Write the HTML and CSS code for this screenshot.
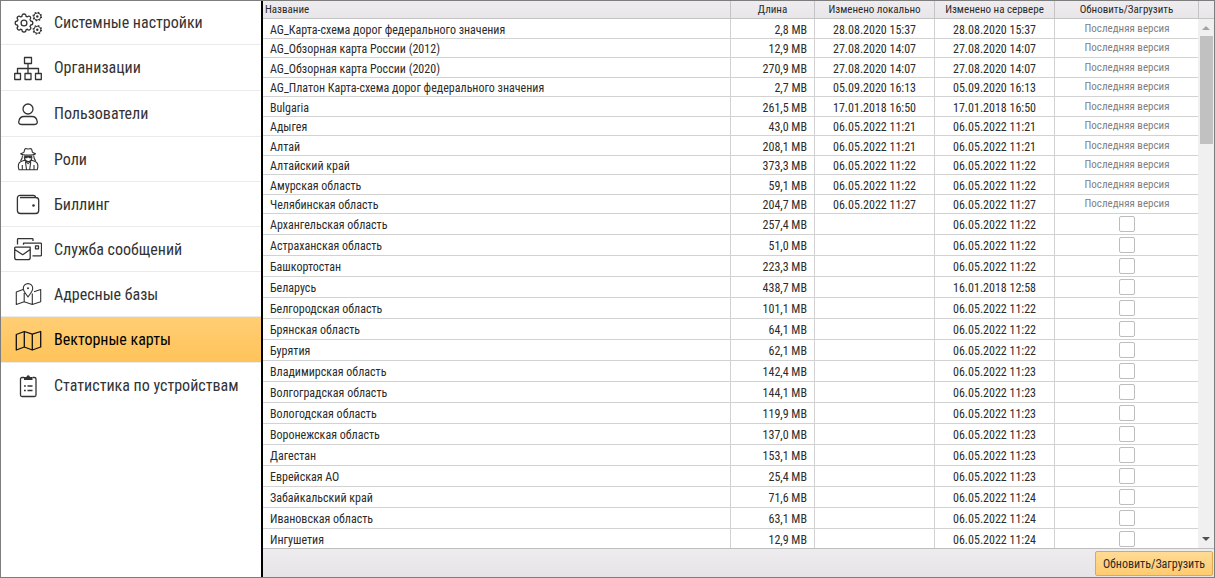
FILE: index.html
```html
<!DOCTYPE html>
<html lang="ru">
<head>
<meta charset="utf-8">
<title>Векторные карты</title>
<link rel="stylesheet" href="styles.css">
</head>
<body>
<div class="app">
  <nav class="sidebar">
    <a class="nav-item" href="#"><svg class="icon" viewBox="0 0 28 28"><path d="M8 7.300 Q7.800 5 10 5 T12 7.300 L13.300 7.900 Q15 6.300 16.200 7.700 T16 10.600 L16.700 12 Q18.800 12 18.800 14 T16.700 16 L16 17.500 Q17.600 19 16.200 20.400 T13.300 20.200 L12 20.800 Q12.200 23 10 23 T8 20.800 L6.700 20.200 Q5 21.800 3.700 20.400 T4 17.500 L3.300 16 Q1.200 16 1.200 14 T3.300 12 L4 10.600 Q2.400 9 3.700 7.700 T6.700 7.900 Z"/><circle cx="10" cy="14" r="2.900"/><circle class="cog" cx="23.300" cy="7.500" r="3.500"/><circle class="teeth" cx="23.300" cy="7.500" r="4.200"/><circle class="dot" cx="23.300" cy="7.500" r="1.200"/><circle class="cog" cx="23.300" cy="20.800" r="3.500"/><circle class="teeth" cx="23.300" cy="20.800" r="4.200"/><circle class="dot" cx="23.300" cy="20.800" r="1.200"/></svg><span>Системные настройки</span></a>
    <a class="nav-item" href="#"><svg class="icon" viewBox="0 0 28 28"><path d="M10.500 3.500h7v6h-7z M14 9.500v10 M3.500 19.500v-5h21v5 M.700 19.500h5.800v6H.700z M11 19.500h6v6h-6z M21.500 19.500h5.800v6h-5.800z"/></svg><span>Организации</span></a>
    <a class="nav-item" href="#"><svg class="icon" viewBox="0 0 28 28"><circle cx="14" cy="9" r="5"/><path d="M7.500 24.500c-3 0-3-2-2.600-3.500 .6-3 2.500-4.500 5.100-4.500h8c2.600 0 4.500 1.500 5.100 4.500 .4 1.500 .4 3.500-2.600 3.500z"/></svg><span>Пользователи</span></a>
    <a class="nav-item" href="#"><svg class="icon thin" viewBox="0 0 28 28"><path d="M6.700 8.700c1.500-.6 2.600-.8 3.300-1.500l.8-3c.8-1.200 2-.2 3.400-.2s2.600-1 3.400.2l.8 3c.7.700 1.600.9 3.100 1.500-2.500 1.800-12.300 1.800-14.800 0z M8.500 10.500c0 2-.3 3.500-2 5.300 M19.700 10.500c0 2 .3 3.500 2 5.300 M10.300 11.500c0 3 1.700 5 3.800 5s3.800-2 3.800-5 M5 24.800c-1.300-4-.8-7 2-8.300l3.500-1.300 3.600 3.500 3.600-3.500 3.500 1.300c2.800 1.300 3.300 4.300 2 8.300z M8.300 20v4.500 M20 20v4.500 M11.500 17l1 7.500 M16.700 17l-1 7.500"/><path class="fill" d="M9.800 10.500h8.700l-1.200 2.700h-2.200l-1-1-1 1H11z"/></svg><span>Роли</span></a>
    <a class="nav-item" href="#"><svg class="icon" viewBox="0 0 28 28"><path d="M6 7.500h15.700a3 3 0 0 1 3 3v10a3 3 0 0 1-3 3H6.400a3 3 0 0 1-3-3v-12.500a2.600 2.600 0 0 1 2.600-2.700h13.500a2 2 0 0 1 2 2"/><circle class="fill" cx="19.500" cy="15.500" r="1.300"/></svg><span>Биллинг</span></a>
    <a class="nav-item" href="#"><svg class="icon" viewBox="0 0 28 28"><path d="M3.500 9.500V4.500a.8.800 0 0 1 .8-.8h13.900a.8.800 0 0 1 .8.800v1.500 M9.500 9.700V8.200h17a1 1 0 0 1 1 1v10.600a1 1 0 0 1-1 1H18.500 M1.500 12.200h14.700v10.300a2.200 2.200 0 0 1-2.200 2.200H2.900a2.200 2.200 0 0 1-2.200-2.200v-9.500a.8.800 0 0 1 .8-.8z M.7 14.500l8 5.200 7.500-5.200 M21.500 10.800h3v3h-3z"/></svg><span>Служба сообщений</span></a>
    <a class="nav-item" href="#"><svg class="icon thin" viewBox="0 0 28 28"><path d="M9 9.500l-6.700 2.500v12.500l7.900-2.700 8.100 2.700 8.400-2.700V9.500l-6.700 2.300 M10.200 13v8.800 M18.300 13.500v11 M14 17c-1.500-2.500-4.700-5.200-4.700-8.700a4.700 4.700 0 0 1 9.400 0c0 3.500-3.200 6.200-4.700 8.700z"/><circle class="fill" cx="14" cy="8.300" r="1"/></svg><span>Адресные базы</span></a>
    <a class="nav-item active" href="#"><svg class="icon" viewBox="0 0 28 28"><path d="M2.300 8.500l8-3 8 2.700 8.400-2.700v15.500l-8.400 3-8-3-8 3z M10.300 5.500V21 M18.300 8.200V24"/></svg><span>Векторные карты</span></a>
    <a class="nav-item" href="#"><svg class="icon" viewBox="0 0 28 28"><path d="M10 5.500H8a1.500 1.500 0 0 0-1.500 1.500v16a1.500 1.500 0 0 0 1.500 1.500h12.500a1.500 1.500 0 0 0 1.500-1.500V7a1.500 1.500 0 0 0-1.500-1.500H18.500 M13.500 14h5 M13.500 18.500h5 M10 14h1.800 M10 18.500h1.800"/><path class="fill" d="M10 8V5h2.500a1.700 1.700 0 0 1 3.400 0h2.600v3z"/></svg><span>Статистика по устройствам</span></a>
  </nav>
  <main class="content">
    <div class="scroller">
      <table class="maps">
        <colgroup><col><col class="c-size"><col class="c-date"><col class="c-date"><col class="c-act"><col class="c-bar"></colgroup>
        <thead><tr><th class="name">Название</th><th>Длина</th><th>Изменено локально</th><th>Изменено на сервере</th><th>Обновить/Загрузить</th><th></th></tr></thead>
        <tbody id="rows"></tbody>
      </table>
      <div class="scrollbar"><span class="arrow up"></span><span class="thumb"></span><span class="arrow down"></span></div>
    </div>
    <footer class="footer"><button class="update" type="button">Обновить/Загрузить</button></footer>
  </main>
</div>
<script src="rows.js"></script>
</body>
</html>
```
FILE: styles.css
```css
* { box-sizing: border-box; }
body {
  margin: 0;
  font-family: "Roboto Condensed", Roboto, sans-serif;
  font-size: 12px;
  color: #2b2b2b;
}
.app {
  display: flex;
  height: 100vh;
  border: 1px solid #7d7d7d;
  background: #fff;
  overflow: hidden;
}
.sidebar {
  flex: 0 0 262px;
  border-right: 2px solid #000;
}
.nav-item {
  display: flex;
  align-items: center;
  gap: 12px;
  height: 45px;
  padding-left: 13px;
  border-bottom: 1px solid #ebebeb;
  font-size: 16px;
  color: #333;
  text-decoration: none;
}
.nav-item:first-child { height: 44px; }
.nav-item:nth-child(2), .nav-item:nth-child(3), .nav-item:nth-child(8) { height: 46px; }
.nav-item:last-child { border-bottom: 0; }
.nav-item.active {
  background: linear-gradient(#ffce74, #ffc35a);
  color: #000;
}
.icon {
  width: 28px;
  height: 28px;
  fill: none;
  stroke: #333;
  stroke-width: 1.3;
  stroke-linejoin: round;
}
.icon.thin { stroke-width: 1.1; }
.active .icon { stroke: #111; }
.icon .fill, .icon .dot { fill: #333; stroke: none; }
.icon .cog { stroke-width: 1; }
.icon .teeth { stroke-width: 1.2; stroke-dasharray: 1.6 1.7; }
.content {
  flex: 1;
  min-width: 0;
  display: flex;
  flex-direction: column;
}
.scroller {
  position: relative;
  flex: 1;
  min-height: 0;
  overflow: hidden;
}
.maps {
  width: 100%;
  table-layout: fixed;
  border-collapse: separate;
  border-spacing: 0;
}
.c-size { width: 84px; }
.c-date { width: 120px; }
.c-act { width: 144px; }
.c-bar { width: 15px; }
th, td {
  padding: 0;
  border-right: 1px solid #d2d2d2;
  border-bottom: 1px solid #d2d2d2;
  line-height: 16px;
  text-align: center;
  white-space: nowrap;
}
th {
  height: 18px;
  background: linear-gradient(#eeecee, #e8e6e8);
  border-color: #c4c4c4;
  font-size: 11px;
  font-weight: 400;
}
th:last-child { border-right: 0; }
th.name { padding-left: 2px; text-align: left; }
td { height: 21px; padding-top: 2px; }
.current td { height: 19px; }
.current:nth-child(odd) td { height: 20px; }
td.name { padding-left: 7px; text-align: left; }
td.size { padding-right: 7px; text-align: right; }
td.action, td.bar { padding-top: 0; border-right: 0; }
.current td.action {
  font-size: 11px;
  color: #808080;
}
.check {
  appearance: none;
  display: block;
  width: 16px;
  height: 16px;
  margin: 0 auto;
  border: 1px solid #bdbdbd;
  border-radius: 2px;
  background: #fff;
}
.scrollbar {
  position: absolute;
  top: 18px;
  right: 0;
  bottom: 0;
  width: 16px;
  display: flex;
  flex-direction: column;
  align-items: center;
  background: #f0f0f0;
  padding: 7px 0 7px;
}
.arrow {
  border: 4px solid transparent;
  height: 0;
}
.up { border-top: 0; border-bottom-color: #a3a3a3; }
.down { margin-top: auto; border-bottom: 0; border-top-color: #505050; }
.thumb {
  width: 13px;
  height: 108px;
  margin-top: 6px;
  background: #c1c1c1;
}
.footer {
  display: flex;
  justify-content: flex-end;
  height: 29px;
  padding: 2px 1px 1px;
  border-top: 1px solid #bdbdbd;
  background: linear-gradient(#eeecee, #e6e4e6);
}
.update {
  padding: 0 7px;
  border: 1px solid #dfa94f;
  border-radius: 2px;
  background: linear-gradient(#ffdb95, #ffcb70);
  font: inherit;
  color: #2b2b2b;
}
```
FILE: rows.js
```js
const maps = [
  ["AG_Карта-схема дорог федерального значения", "2,8", "28.08.2020 15:37", "28.08.2020 15:37"],
  ["AG_Обзорная карта России (2012)", "12,9", "27.08.2020 14:07", "27.08.2020 14:07"],
  ["AG_Обзорная карта России (2020)", "270,9", "27.08.2020 14:07", "27.08.2020 14:07"],
  ["AG_Платон Карта-схема дорог федерального значения", "2,7", "05.09.2020 16:13", "05.09.2020 16:13"],
  ["Bulgaria", "261,5", "17.01.2018 16:50", "17.01.2018 16:50"],
  ["Адыгея", "43,0", "06.05.2022 11:21", "06.05.2022 11:21"],
  ["Алтай", "208,1", "06.05.2022 11:21", "06.05.2022 11:21"],
  ["Алтайский край", "373,3", "06.05.2022 11:22", "06.05.2022 11:22"],
  ["Амурская область", "59,1", "06.05.2022 11:22", "06.05.2022 11:22"],
  ["Челябинская область", "204,7", "06.05.2022 11:27", "06.05.2022 11:27"],
  ["Архангельская область", "257,4", "", "06.05.2022 11:22"],
  ["Астраханская область", "51,0", "", "06.05.2022 11:22"],
  ["Башкортостан", "223,3", "", "06.05.2022 11:22"],
  ["Беларусь", "438,7", "", "16.01.2018 12:58"],
  ["Белгородская область", "101,1", "", "06.05.2022 11:22"],
  ["Брянская область", "64,1", "", "06.05.2022 11:22"],
  ["Бурятия", "62,1", "", "06.05.2022 11:22"],
  ["Владимирская область", "142,4", "", "06.05.2022 11:23"],
  ["Волгоградская область", "144,1", "", "06.05.2022 11:23"],
  ["Вологодская область", "119,9", "", "06.05.2022 11:23"],
  ["Воронежская область", "137,0", "", "06.05.2022 11:23"],
  ["Дагестан", "153,1", "", "06.05.2022 11:23"],
  ["Еврейская АО", "25,4", "", "06.05.2022 11:23"],
  ["Забайкальский край", "71,6", "", "06.05.2022 11:24"],
  ["Ивановская область", "63,1", "", "06.05.2022 11:24"],
  ["Ингушетия", "12,9", "", "06.05.2022 11:24"]
];
document.getElementById("rows").innerHTML = maps.map(([name, size, local, server]) => {
  const action = local ? "Последняя версия" : `<input class="check" type="checkbox" aria-label="${name}">`;
  return `<tr${local ? ' class="current"' : ""}><td class="name">${name}</td><td class="size">${size} MB</td><td>${local}</td><td>${server}</td><td class="action">${action}</td><td class="bar"></td></tr>`;
}).join("");
```
